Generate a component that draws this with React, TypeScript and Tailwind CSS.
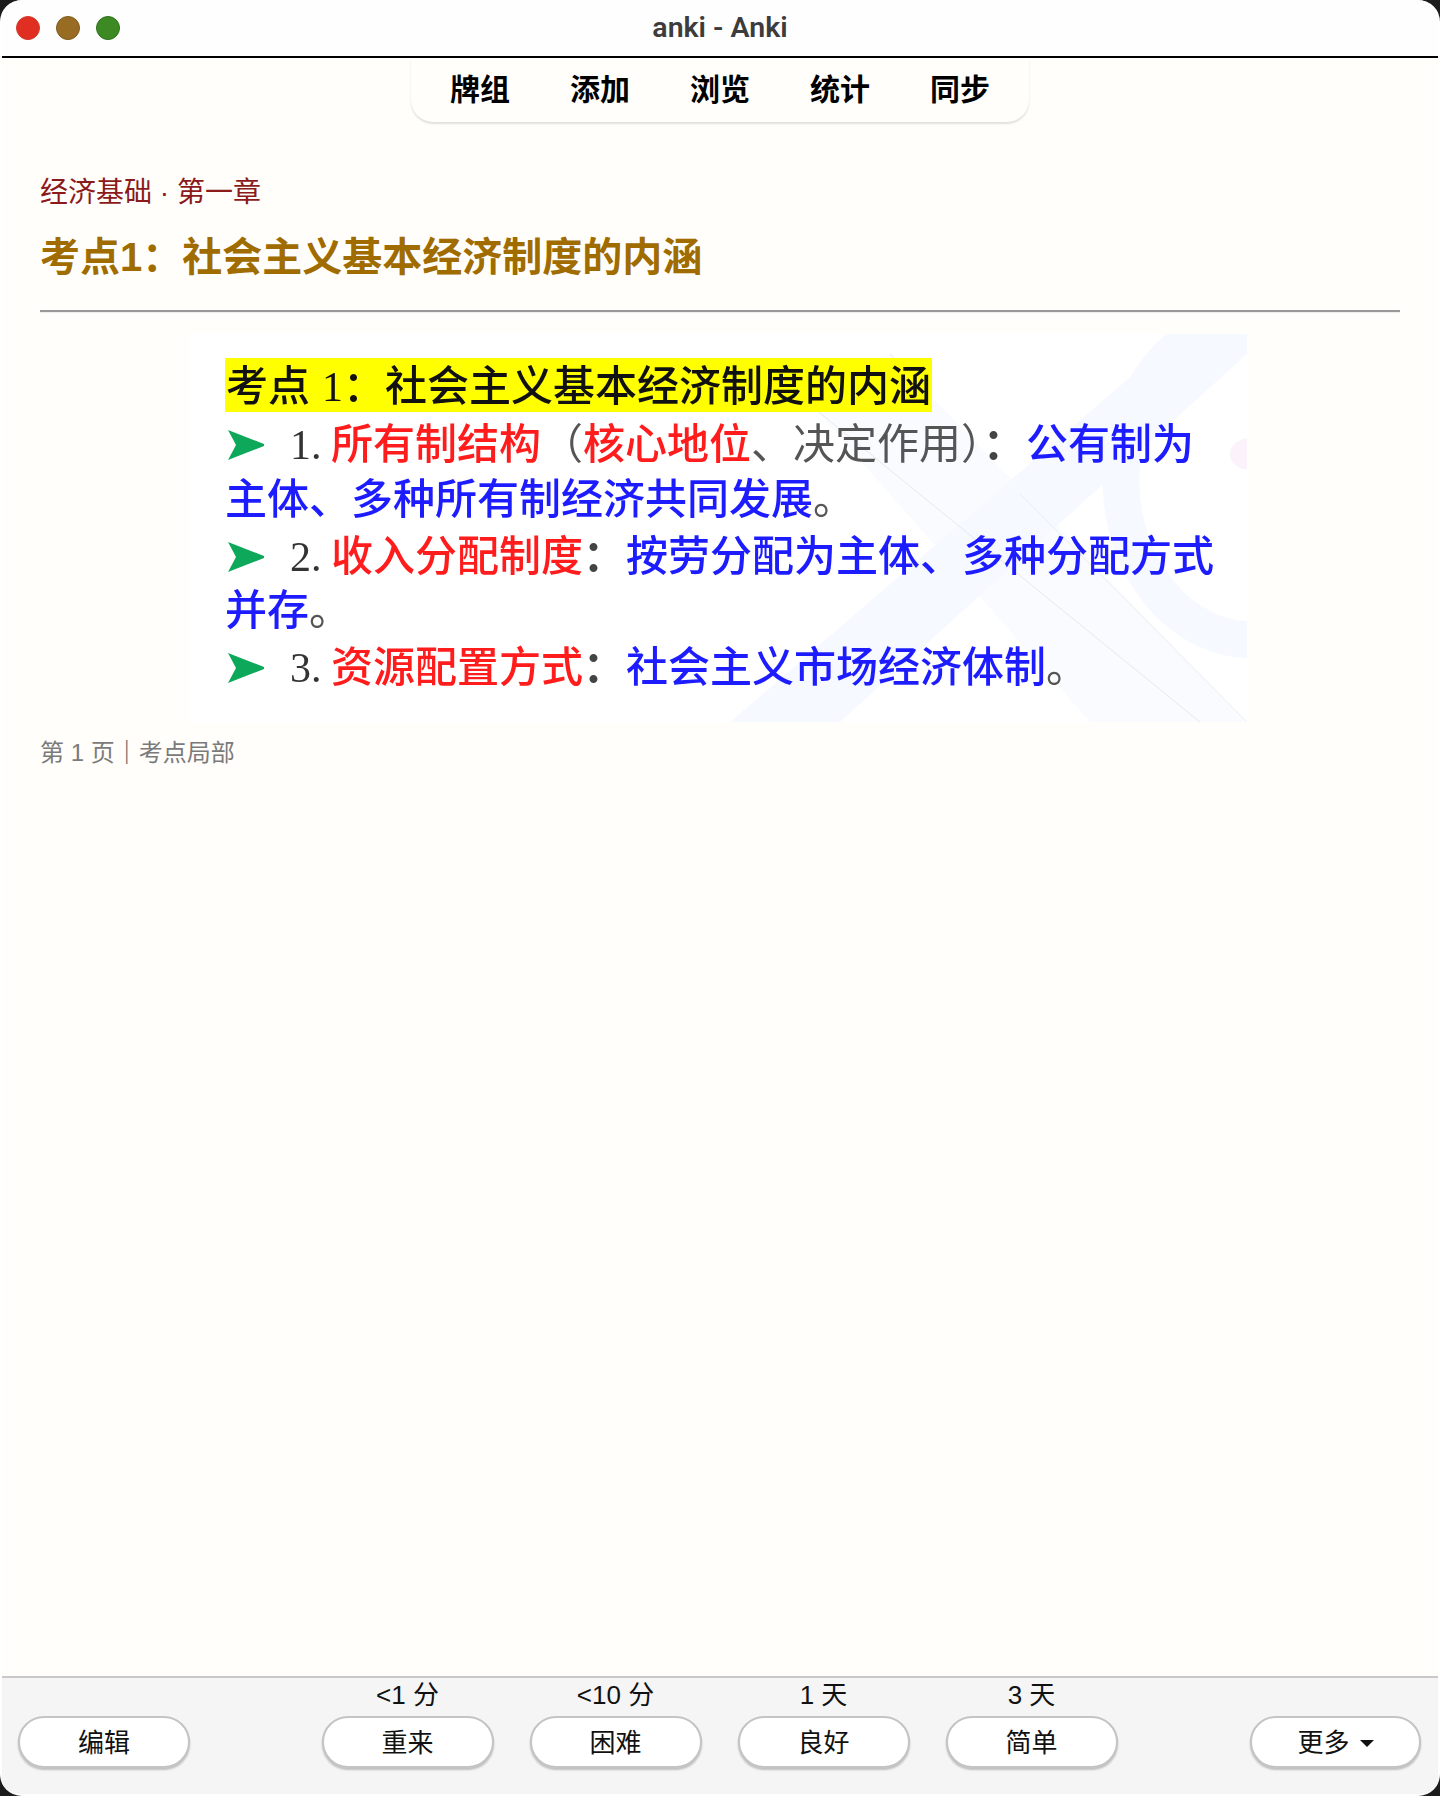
import React from "react";

const sans = { fontFamily: '"Liberation Sans","Noto Sans CJK SC",sans-serif' };
const serif = { fontFamily: '"Liberation Serif","Noto Sans CJK SC",serif' };

const Arrow = () => (
  <svg width="36" height="30" viewBox="0 0 36 30" className="ml-[3px] shrink-0">
    <path d="M0 0 L36 14 L36 16 L0 30 L8 15 Z" fill="#0ea85a" />
  </svg>
);

const Row = ({ h, children }: { h: string; children: React.ReactNode }) => (
  <div className={`flex items-center whitespace-nowrap ${h}`}>{children}</div>
);

const Red = ({ children }: { children: React.ReactNode }) => <span className="font-medium text-[#ff1c1c]">{children}</span>;
const Blue = ({ children }: { children: React.ReactNode }) => <span className="font-medium text-[#1c1cff]">{children}</span>;
const Gray = ({ children }: { children: React.ReactNode }) => <span className="text-[#555555]">{children}</span>;
const Colon = () => <span className="w-[43px] shrink-0 font-bold text-[#444444]">：</span>;
const Num = ({ children }: { children: React.ReactNode }) => (
  <span className="ml-[26px] w-[41px] shrink-0 text-[#333333]" style={serif}>
    {children}
  </span>
);

const Btn = ({ w = "w-[172px]", children }: { w?: string; children: React.ReactNode }) => (
  <button className={`flex h-[52px] items-center justify-center gap-[10px] rounded-full border-2 border-[#c4c4c4] bg-white pt-[2px] text-[26px] leading-none text-[#111111] shadow-[0_2px_2px_rgba(0,0,0,0.22)] ${w}`}>
    {children}
  </button>
);

const Answer = ({ label, text }: { label: string; text: string }) => (
  <div className="flex w-[172px] flex-col items-center">
    <div className="flex h-[38px] items-center pb-[4px] text-[26px] leading-none text-[#111111]">{label}</div>
    <Btn>{text}</Btn>
  </div>
);

export default function App() {
  return (
    <div className="h-[1796px] w-[1440px] bg-[#1c1c1c]" style={sans}>
      <div className="flex h-full w-full flex-col overflow-hidden rounded-[22px] bg-white px-[2px] pb-[2px]">
        <header className="relative flex h-[58px] shrink-0 items-center justify-center border-b-2 border-black bg-[#fefefe]">
          <div className="absolute left-[14px] top-[16px] flex gap-[16px]">
            <span className="h-6 w-6 rounded-full border border-[#d03a2a] bg-[#e02f22]" />
            <span className="h-6 w-6 rounded-full border border-[#7f5a1c] bg-[#996c24]" />
            <span className="h-6 w-6 rounded-full border border-[#2f6f1e] bg-[#3d8a25]" />
          </div>
          <span className="text-[28.5px] font-semibold text-[#3c3c3c]" style={{ fontFamily: "Roboto,sans-serif" }}>
            anki - Anki
          </span>
        </header>

        <main className="flex min-h-0 flex-1 flex-col bg-[#fffefa]">
          <nav className="mx-auto flex h-[64px] w-[618px] shrink-0 items-center justify-center rounded-b-[22px] bg-[#fffefa] shadow-[0_2px_2px_rgba(0,0,0,0.12)]">
            {["牌组", "添加", "浏览", "统计", "同步"].map((t) => (
              <span key={t} className="w-[120px] text-center text-[30px] font-bold leading-none text-black">
                {t}
              </span>
            ))}
          </nav>

          <div className="px-[38px]">
            <div className="mt-[55px] text-[28px] leading-[32px] text-[#8b1a1a]">经济基础 · 第一章</div>
            <h1 className="mt-[26px] text-[40px] font-bold leading-[44px] text-[#a06c00]">考点1：社会主义基本经济制度的内涵</h1>
            <div className="mt-[31px] h-[3px] border-t-2 border-[#999999] bg-[#eeeeee]" />

            <div className="relative ml-[150px] mt-[21px] h-[388px] w-[1057px] overflow-hidden bg-white pl-[35px] pt-[24px] text-[42px] leading-none blur-[0.5px]">
              <svg className="absolute inset-0" width="1057" height="388" viewBox="0 0 1057 388">
                <polygon points="540,388 650,388 1057,20 1057,0 990,0" fill="#f6f9ff" />
                <polygon points="625,75 700,20 1057,388 900,388" fill="#f6f9ff" opacity="0.7" />
                <ellipse cx="1063" cy="146" rx="132" ry="160" fill="none" stroke="#f6f9ff" strokeWidth="37" />
                <path d="M625 75 L1010 388 M700 20 L740 60" stroke="#e6e8ec" strokeWidth="1" />
                <path d="M830 160 L1057 388" stroke="#eceef1" strokeWidth="1" />
                <ellipse cx="1060" cy="120" rx="20" ry="16" fill="#fcf2fc" />
              </svg>
              <div className="relative">
                <div className="flex h-[54px] w-[707px] items-center whitespace-nowrap bg-[#ffff00] pl-px pt-[3px] font-medium text-[#111111]">
                  <span>考点</span>
                  <span className="ml-[12px] w-[63px]" style={serif}>1：</span>
                  <span>社会主义基本经济制度的内涵</span>
                </div>
                <Row h="mt-[4px] h-[58px]">
                  <Arrow />
                  <Num>1.</Num>
                  <Red>所有制结构</Red>
                  <Gray>（</Gray>
                  <Red>核心地位</Red>
                  <Gray>、决定作用</Gray>
                  <Gray><span className="inline-block tracking-[-20px]">）</span></Gray>
                  <Colon />
                  <Blue>公有制为</Blue>
                </Row>
                <Row h="-mt-[2px] h-[55px]">
                  <span><Blue>主体、多种所有制经济共同发展</Blue><Gray>。</Gray></span>
                </Row>
                <Row h="mt-[2px] h-[56px]">
                  <Arrow />
                  <Num>2.</Num>
                  <Red>收入分配制度</Red>
                  <Colon />
                  <Blue>按劳分配为主体、多种分配方式</Blue>
                </Row>
                <Row h="-mt-[2px] h-[55px]">
                  <span><Blue>并存</Blue><Gray>。</Gray></span>
                </Row>
                <Row h="h-[60px]">
                  <Arrow />
                  <Num>3.</Num>
                  <Red>资源配置方式</Red>
                  <Colon />
                  <Blue>社会主义市场经济体制</Blue>
                  <Gray>。</Gray>
                </Row>
              </div>
            </div>

            <div className="mt-[17px] text-[24px] leading-[28px] text-[#7a7a7a]">
              第 1 页<span className="font-bold text-[#666666]">｜</span>考点局部
            </div>
          </div>
        </main>

        <footer className="flex h-[118px] shrink-0 items-end justify-between border-t-2 border-[#c8c8c8] bg-[#f5f5f5] pb-[26px] pl-[16px] pr-[17px]">
          <Btn>编辑</Btn>
          <div className="flex gap-[36px] pr-[1px]">
            <Answer label="<1 分" text="重来" />
            <Answer label="<10 分" text="困难" />
            <Answer label="1 天" text="良好" />
            <Answer label="3 天" text="简单" />
          </div>
          <Btn w="w-[171px]">
            更多
            <svg width="14" height="7" viewBox="0 0 14 7">
              <path d="M0 0 H14 L7 7 Z" fill="#111111" />
            </svg>
          </Btn>
        </footer>
      </div>
    </div>
  );
}
